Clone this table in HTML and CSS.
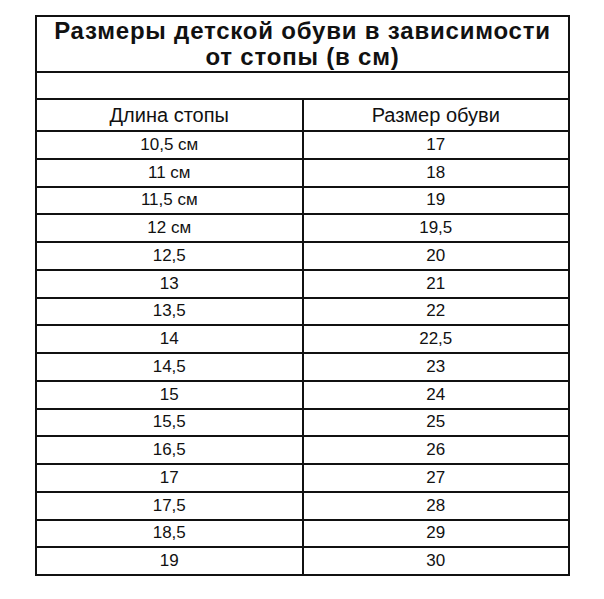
FILE: index.html
```html
<!DOCTYPE html>
<html lang="ru">
<head>
<meta charset="utf-8">
<link rel="stylesheet" href="styles.css">
</head>
<body>
<table class="sizes">
  <tr class="title-row"><td colspan="2" class="title">Размеры детской обуви в зависимости<br>от стопы (в см)</td></tr>
  <tr class="empty-row"><td colspan="2"></td></tr>
  <tr class="head-row"><td>Длина стопы</td><td>Размер обуви</td></tr>
  <tr class="row"><td>10,5 см</td><td>17</td></tr>
  <tr class="row"><td>11 см</td><td>18</td></tr>
  <tr class="row"><td>11,5 см</td><td>19</td></tr>
  <tr class="row"><td>12 см</td><td>19,5</td></tr>
  <tr class="row"><td>12,5</td><td>20</td></tr>
  <tr class="row"><td>13</td><td>21</td></tr>
  <tr class="row"><td>13,5</td><td>22</td></tr>
  <tr class="row"><td>14</td><td>22,5</td></tr>
  <tr class="row"><td>14,5</td><td>23</td></tr>
  <tr class="row"><td>15</td><td>24</td></tr>
  <tr class="row"><td>15,5</td><td>25</td></tr>
  <tr class="row"><td>16,5</td><td>26</td></tr>
  <tr class="row"><td>17</td><td>27</td></tr>
  <tr class="row"><td>17,5</td><td>28</td></tr>
  <tr class="row"><td>18,5</td><td>29</td></tr>
  <tr class="row"><td>19</td><td>30</td></tr>
</table>
</body>
</html>
```
FILE: styles.css
```css
html, body {
  margin: 0;
  padding: 0;
  background: #fff;
}
body {
  padding: 15px 0 0 35px;
  font-family: "Liberation Sans", Arial, sans-serif;
  color: #111;
}
.sizes {
  border-collapse: collapse;
  width: 535px;
  table-layout: fixed;
}
.sizes td {
  border: 2px solid #111;
  text-align: center;
  padding: 0;
  font-size: 17px;
  vertical-align: middle;
}
.title-row td {
  height: 54px;
  font-weight: bold;
  font-size: 24px;
  letter-spacing: 0.8px;
  line-height: 26px;
}
.empty-row td {
  height: 25px;
}
.head-row td {
  height: 30px;
  font-size: 20px;
}
.row td {
  height: 25.75px;
}
```
